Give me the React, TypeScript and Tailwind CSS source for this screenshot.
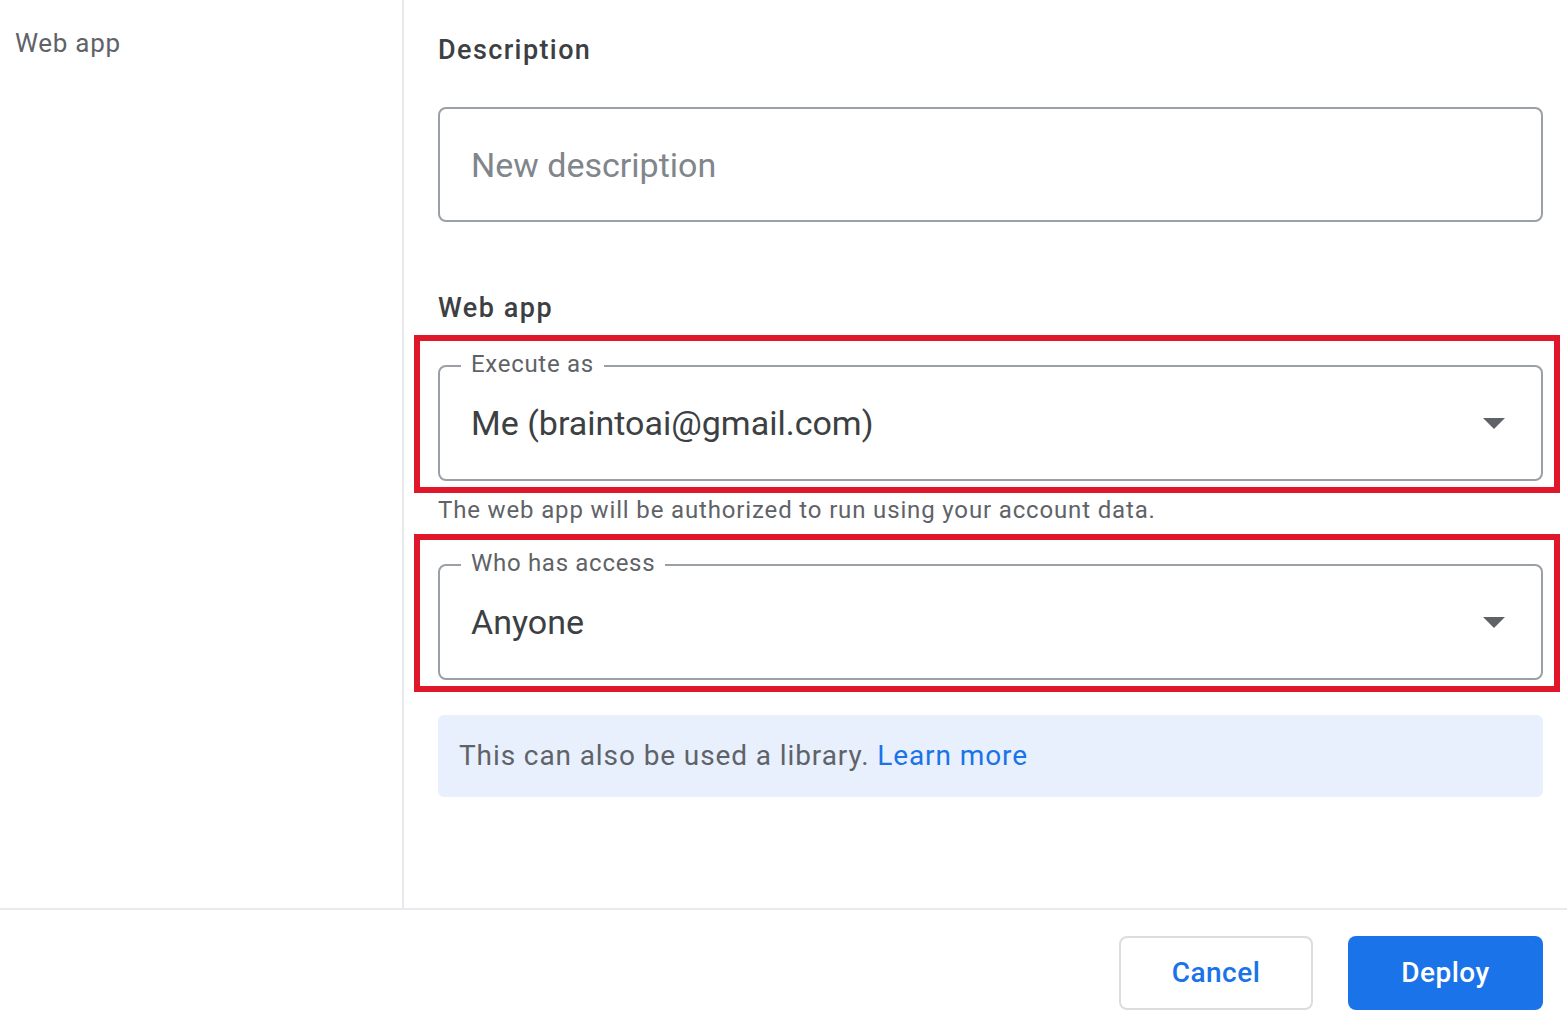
import React from 'react';

function SelectField({ label, value }: { label: string; value: string }) {
  return (
    <div className="relative h-[116px] border-2 border-[#9aa0a6] rounded-[8px] flex items-center">
      <span className="absolute top-[-17px] left-[21px] px-[10px] bg-white text-[24px] leading-[28px] tracking-[0.7px] text-[#5f6368]">
        {label}
      </span>
      <span className="flex-1 pl-[31px] text-[34px] leading-[40px] text-[#3c4043]">{value}</span>
      <svg width="22" height="11" viewBox="0 0 22 11" className="mr-[36px]">
        <path d="M0 0 L22 0 L11 11 Z" fill="#5f6368" />
      </svg>
    </div>
  );
}

export default function App() {
  return (
    <div
      className="w-[1567px] h-[1031px] bg-white flex flex-col overflow-hidden"
      style={{ fontFamily: 'Roboto, "Liberation Sans", sans-serif' }}
    >
      <div className="flex h-[910px] border-b-2 border-[#e8eaed]">
        {/* Sidebar */}
        <div className="w-[404px] shrink-0 border-r-2 border-[#e6e8eb] pl-[15px] pt-[27px]">
          <div className="text-[26px] leading-[32px] tracking-[0.7px] text-[#5f6368]">Web app</div>
        </div>

        {/* Form */}
        <div className="flex-1 pl-[34px] pr-[24px] pt-[32px] flex flex-col">
          <h2 className="text-[27px] leading-[36px] font-medium tracking-[1.4px] text-[#3c4043]">Description</h2>
          <div className="mt-[39px] h-[115px] border-2 border-[#9aa0a6] rounded-[8px] flex items-center pl-[31px]">
            <span className="text-[34px] leading-[40px] text-[#80868b]">New description</span>
          </div>

          <h2 className="mt-[68px] text-[27px] leading-[36px] font-medium tracking-[1.5px] text-[#3c4043]">Web app</h2>

          <div className="mt-[9px] -ml-[24px] -mr-[17px] border-[6px] border-[#e0172a] pt-[24px] pl-[18px] pr-[11px] pb-[6px]">
            <SelectField label="Execute as" value="Me (braintoai@gmail.com)" />
          </div>

          <p className="mt-[3px] text-[24px] leading-[28px] tracking-[0.85px] text-[#5f6368]">
            The web app will be authorized to run using your account data.
          </p>

          <div className="mt-[10px] -ml-[24px] -mr-[17px] border-[6px] border-[#e0172a] pt-[24px] pl-[18px] pr-[11px] pb-[6px]">
            <SelectField label="Who has access" value="Anyone" />
          </div>

          <div className="mt-[23px] h-[82px] bg-[#e8f0fe] rounded-[6px] flex items-center pl-[21px]">
            <span className="text-[28px] leading-[34px] tracking-[0.9px] text-[#5f6368]">
              This can also be used a library. <span className="text-[#1a73e8]">Learn more</span>
            </span>
          </div>
        </div>
      </div>

      {/* Footer */}
      <div className="flex justify-end gap-[35px] pr-[24px] pt-[26px]">
        <button className="w-[194px] h-[74px] border-2 border-[#dadce0] rounded-[8px] bg-white text-[28px] font-medium text-[#1a73e8] tracking-[0.5px]">
          Cancel
        </button>
        <button className="w-[195px] h-[74px] rounded-[8px] bg-[#1a73e8] text-[28px] font-medium text-white tracking-[0.5px]">
          Deploy
        </button>
      </div>
    </div>
  );
}
